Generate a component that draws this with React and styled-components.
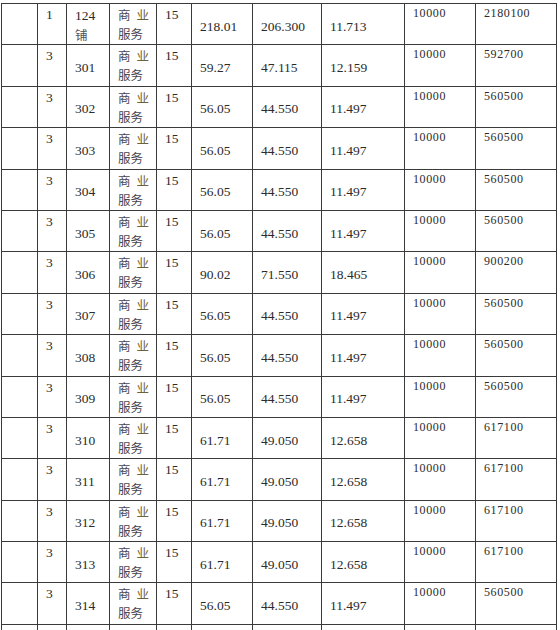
import React from "react";
import styled, { createGlobalStyle } from "styled-components";

const GlobalStyle = createGlobalStyle`
	html, body {
		margin: 0;
		padding: 0;
		background: #ffffff;
		overflow: hidden;
	}
	body {
		height: 630px;
		font-family: "Liberation Serif", "Times New Roman", serif;
	}
`;

const Page = styled.div`
	padding: 3px 0 0 1px;
	height: 630px;
	overflow: hidden;
	box-sizing: border-box;
`;

const Table = styled.table`
	border-collapse: collapse;
	table-layout: fixed;
	width: 555px;
	color: #2b2b2b;
`;

const Row = styled.tr`
	height: 41.4px;
`;

const Cell = styled.td`
	border: 1.5px solid #3a3a3a;
	padding: ${props => (props.$top ? "1px 6px 0 8px" : "4px 6px 0 8px")};
	vertical-align: ${props => (props.$top ? "top" : "middle")};
	font-family: "Liberation Serif", "Times New Roman", serif;
	font-size: ${props => (props.$small ? "12px" : "13.5px")};
	letter-spacing: ${props => (props.$small ? "0.6px" : "0")};
	line-height: ${props => (props.$small ? "16px" : "19px")};
	white-space: nowrap;
	overflow: hidden;
`;

const Usage = styled.div`
	font-family: "Noto Sans CJK SC", sans-serif;
	font-size: 12.5px;
	line-height: 19px;
	color: #4a4450;
	margin-top: 0;
	padding-right: 1px;
`;

const UsageLine = styled.div`
	display: flex;
	justify-content: ${props => (props.$spread ? "space-between" : "flex-start")};
`;

const Ye = styled.span`
	color: #6e6236;
`;

const Room = styled.div`
	line-height: 19px;
	padding-top: 1px;
`;

const Shop = styled.div`
	font-family: "Noto Sans CJK SC", sans-serif;
	font-size: 12.5px;
	line-height: 19px;
	color: #555050;
`;

const widths = [36, 29, 43, 47, 35, 61, 69, 83, 71, 81];

const std = ["56.05", "44.550", "11.497", "560500"];
const big = ["61.71", "49.050", "12.658", "617100"];

const rows = [
	["3", "301", "59.27", "47.115", "12.159", "592700"],
	["3", "302", ...std],
	["3", "303", ...std],
	["3", "304", ...std],
	["3", "305", ...std],
	["3", "306", "90.02", "71.550", "18.465", "900200"],
	["3", "307", ...std],
	["3", "308", ...std],
	["3", "309", ...std],
	["3", "310", ...big],
	["3", "311", ...big],
	["3", "312", ...big],
	["3", "313", ...big],
	["3", "314", ...std],
];

const UsageCell = () => (
	<Cell $top>
		<Usage>
			<UsageLine $spread>
				<span>商</span>
				<Ye>业</Ye>
			</UsageLine>
			<UsageLine>服务</UsageLine>
		</Usage>
	</Cell>
);

const DataRow = ({ floor, room, a, b, c, total }) => (
	<Row>
		<Cell />
		<Cell $top>{floor}</Cell>
		<Cell>{room}</Cell>
		<UsageCell />
		<Cell $top>15</Cell>
		<Cell>{a}</Cell>
		<Cell>{b}</Cell>
		<Cell>{c}</Cell>
		<Cell $top $small>
			10000
		</Cell>
		<Cell $top $small>
			{total}
		</Cell>
	</Row>
);

export default function App() {
	return (
		<Page>
			<GlobalStyle />
			<Table>
				<colgroup>
					{widths.map((w, i) => (
						<col key={i} style={{ width: w }} />
					))}
				</colgroup>
				<tbody>
					<Row>
						<Cell />
						<Cell $top>1</Cell>
						<Cell $top>
							<Room>124</Room>
							<Shop>铺</Shop>
						</Cell>
						<UsageCell />
						<Cell $top>15</Cell>
						<Cell>218.01</Cell>
						<Cell>206.300</Cell>
						<Cell>11.713</Cell>
						<Cell $top $small>
							10000
						</Cell>
						<Cell $top $small>
							2180100
						</Cell>
					</Row>
					{rows.map(r => (
						<DataRow
							key={r[1]}
							floor={r[0]}
							room={r[1]}
							a={r[2]}
							b={r[3]}
							c={r[4]}
							total={r[5]}
						/>
					))}
					<Row>
						{widths.map((w, i) => (
							<Cell key={i} />
						))}
					</Row>
				</tbody>
			</Table>
		</Page>
	);
}
